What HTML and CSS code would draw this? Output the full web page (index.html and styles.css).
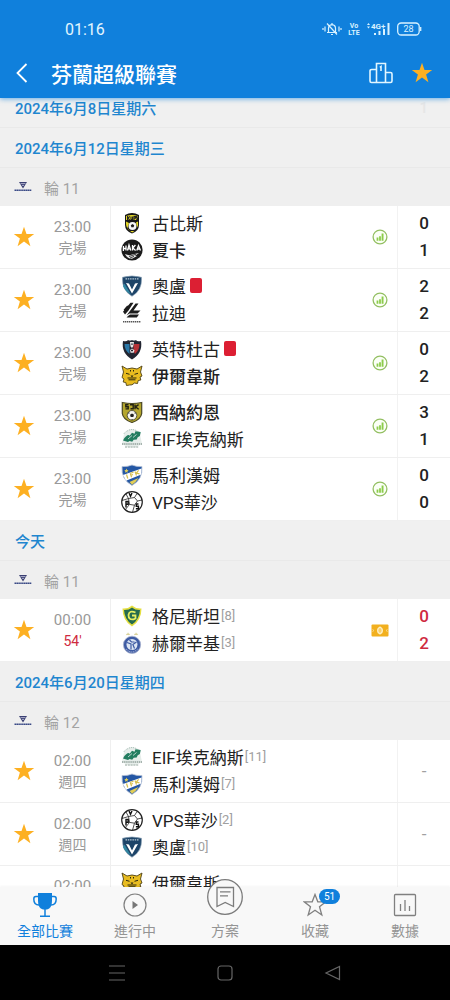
FILE: index.html
```html
<!DOCTYPE html>
<html lang="zh-Hant">
<head>
    <meta charset="UTF-8">
    <meta name="viewport" content="width=device-width, initial-scale=1.0">
    <title>芬蘭超級聯賽</title>
    <link rel="stylesheet" href="styles.css">
</head>
<body>

<!-- shared icons and club crests -->
<svg class="sprite" aria-hidden="true">
    <symbol id="star" viewBox="0 0 22 22">
        <path fill="#fdb022" d="M11 .8l2.5 7.2h7.7l-6.1 4.6 2.3 7.6-6.4-4.6-6.4 4.6 2.3-7.6L.8 8h7.7z"/>
    </symbol>
    <symbol id="stats" viewBox="0 0 16 16">
        <circle cx="8" cy="8" r="6.9" fill="#fbfff6" stroke="#93bf62" stroke-width="1.3"/>
        <path fill="#8ccc4a" d="M4.6 8.6h1.800v3.200H4.600zM7.100 7.200h1.800v4.600H7.100zM9.600 4.400h1.900v7.400H9.600z"/>
    </symbol>
    <symbol id="pitch" viewBox="0 0 18 13">
        <rect x=".5" y=".5" width="17" height="12" rx="1" fill="#f2b01e"/>
        <path fill="none" stroke="#f9d98c" d="M9 2v9M1.500 5.500L3 6.500 1.500 7.500M16.500 5.500L15 6.500l1.500 1"/>
        <ellipse cx="9" cy="6.500" rx="2.300" ry="3" fill="#f9d06c" stroke="#fff3cf" stroke-width="1.200"/>
    </symbol>
    <symbol id="league" viewBox="0 0 18 12">
        <path fill="#3a3f72" d="M5 1h8L9 7.600z"/>
        <path fill="none" stroke="#c9cbe0" stroke-width=".8" d="M6.500 2.600h5M8 4.400h2"/>
        <path stroke="#3a4a86" stroke-width="1.500" stroke-dasharray="1.600 .3" d="M.5 9.300h17"/>
    </symbol>

    <symbol id="kups" viewBox="0 0 22 22">
        <path fill="#161616" d="M4 3q7-4 14 0v10q0 6-7 8.600Q4 19 4 13z"/>
        <path fill="#e9dc2a" d="M5 4q6-2 12 0v4H5z"/>
        <path fill="none" stroke="#222" stroke-width="1.100" d="M6.500 4v4M8.800 4.500L6.800 6l2 1.800M10 4.500v3h1.600v-3M13 8V4.600h1.500v1.700H13M16.500 4.400h-1.100v1.500h1.100v1.700h-1.300"/>
        <circle cx="11.500" cy="14" r="4" fill="#f6f6f6"/>
        <path fill="#222" d="M11.500 12l1.700 1.300-.6 2h-2.200l-.6-2z"/>
        <path fill="#e9dc2a" d="M5 9.500l3 1.500-1.500 5 2.500 3Q4.600 16 5 9.500zm12 0l-2 1 1.300 5Q17.500 13 17 9.500zM9 19h4.500l-2.300 1.600z"/>
    </symbol>
    <symbol id="haka" viewBox="0 0 22 22">
        <circle cx="11" cy="11" r="10.600" fill="#1b1b1b"/>
        <path fill="none" stroke="#fff" stroke-width="1.300" d="M2.400 7v5M5 6.500v5M2.400 9.500H5M6.500 11.500L8 6l1.800 5.500M7 9.800h2M11.500 6v5.500M14.400 6l-2.600 3 2.800 2.500M15.800 11.500L17.500 6.500l2 5M16.300 10h2.500"/>
        <path fill="#e8e8e8" d="M4 15q4 2 7 .5l7-1.500-4 2.800 2 .3-5 2.700q-5-.3-7-4.800z"/>
        <path stroke="#1b1b1b" stroke-width=".8" d="M8 17.500l7-2.300M9 19l4-1.600"/>
    </symbol>
    <symbol id="ac" viewBox="0 0 22 22">
        <path fill="#1d4468" stroke="#94a9bb" stroke-width=".7" d="M1.500 2.300Q11-.5 20.500 2.300q1 13-9.500 19Q.5 15 1.500 2.300z"/>
        <path stroke="#b8cad6" stroke-width="1.300" stroke-dasharray="1.500 .8" d="M4.500 3.900h13"/>
        <path fill="#fff" d="M5 8l3 .5 3 6 3-6 3-.5-6 10.500z"/>
        <path fill="#3186a1" d="M2 11q2 5 8 8.500l-3-5-3.500-6z"/>
    </symbol>
    <symbol id="lahti" viewBox="0 0 22 22">
        <path fill="#1c1c1c" d="M9.500 .8h3L7.500 8.500 4 12.500 2 9.800zM14.500 1.500h3l-5 7h7l-3 3H8.500L5.500 13.500zM7 14l2-1.500h9L15.800 15.500H5.500z"/>
        <path fill="#1c1c1c" d="M6 3.800h2L3.600 9l-1-1.200z"/>
        <path stroke="#555" stroke-width="1.500" stroke-dasharray="1.400 .6" d="M2 19.800h18"/>
    </symbol>
    <symbol id="inter" viewBox="0 0 22 22">
        <path fill="#222531" d="M2 3q4 1 5-1 2 1 4 0 2 1 4 0 1 2 5 1 2 12-9 18.500Q0 15 2 3z"/>
        <path fill="#2b78a8" d="M3.500 6h5v10q-5-4-5-10z"/>
        <path fill="#b73337" d="M12.500 6h6q0 6-4.500 10l-1.500-3z"/>
        <path fill="#e9e9e9" d="M9 4h4l-.8 4.500L11 10 9.500 8.500zM9 12l2-1.500 2.500 1.700-.8 2.600H9.600z"/>
        <path fill="#222531" d="M10 11.800h2v1.500h-2zM10.200 5.500h1.600v1.300h-1.600z"/>
    </symbol>
    <symbol id="ilves" viewBox="0 0 22 22">
        <path fill="#e8bc20" stroke="#4d4116" stroke-width=".9" d="M1 1l5 3q5-2 10 0l5-3-1.500 6 1.500 4-2 1 .8 3-2.600.5-.7 3-3-.5-2.500 1.800L8.500 20l-3 .5-.7-3-2.600-.5.8-3-2-1.500L2.500 7z"/>
        <path fill="none" stroke="#2c280f" stroke-width="1" d="M5 8.300l3.500 1M17 8.300l-3.500 1M6.500 13h9M7.500 14.800h7M9.500 5v1.500M12.500 5v1.500"/>
        <path fill="#2c280f" d="M9.500 10.500h3L11 12.400z"/>
    </symbol>
    <symbol id="sjk" viewBox="0 0 22 22">
        <path fill="#b5a72e" stroke="#4a4724" stroke-width="1.200" d="M1.300 1.500q9.700 2 19.400 0v11q-.7 6-9.700 9-9-3-9.700-9z"/>
        <path fill="none" stroke="#222212" stroke-width="1.400" d="M7.500 3.800H4.800v2h2.400v2.100H4.500M9 3.800h3.200v3.900H9.500M14 3.600v4.600M17.600 3.600l-3.200 2.200 3.300 2.400"/>
        <circle cx="11" cy="14.300" r="4.800" fill="#f7f7f0" stroke="#26261a" stroke-width=".7"/>
        <path fill="#222" d="M11 12.400l2 1.400-.7 2.200H9.700L9 13.800zM6.800 12l1.600-.8-.2 1.800zM15.200 12l-1.600-.8.200 1.800zM10 18.200h2.200l-1 .9z"/>
    </symbol>
    <symbol id="eif" viewBox="0 0 22 22">
        <path fill="#e6edea" d="M3 6Q11-3 19 6l2 10q-10 7-20 0z"/>
        <path fill="none" stroke="#9bb3aa" stroke-dasharray="1.200 .8" d="M3 5.500Q11-2.500 19 5.500"/>
        <path fill="#237d60" d="M2 12.500q3-6 6.500-5.500l-.5 1.500 3-3.800 2.500 1 1-2.500 5.200.8-.8 4-2.200 1.200-1 2.300-3 .2-1.500 2-2.600-.7-1.600 1z"/>
        <path stroke="#f4f8f6" stroke-width=".7" d="M7 11l4-3.500M12 9.500l3.500-3"/>
        <path fill="none" stroke="#a7b4af" stroke-width="1.800" stroke-dasharray="1.400 .7" d="M1 16h20"/>
        <path fill="none" stroke="#b6c2bd" stroke-width="1.500" stroke-dasharray="2 .8" d="M4 19h14"/>
    </symbol>
    <symbol id="ifk" viewBox="0 0 22 22">
        <path fill="#2457a4" stroke="#b7c3d7" stroke-width=".8" d="M1 2.500Q6 3 11 1q5 2 10 1.500 1 13-10 19Q0 15.500 1 2.500z"/>
        <path fill="#fff" d="M2 11L20.500 4.500l-.3 6L5 16.800z"/>
        <path fill="none" stroke="#d5bf4d" stroke-width="1.200" d="M5.500 10.500l1.300 4M9.200 9.300l1.400 4M9.500 9.200l3-1M10 11.200l2-.7M14 7.500l1.500 4M17.600 6.300l-2.300 2.800 3.200.7"/>
        <path fill="#e2ce56" d="M5.500 4.500l.6 1.500 1.500.2-1.200 1 .3 1.500-1.400-.8-1.300.8.300-1.500-1-1 1.500-.2zM8.500 18l9-4-3 4-3.500 2.700z"/>
    </symbol>
    <symbol id="vps" viewBox="0 0 22 22">
        <circle cx="11" cy="11" r="10.300" fill="#fff" stroke="#222" stroke-width="1.200"/>
        <path fill="none" stroke="#222" stroke-width=".8" d="M5 3l2.500 4.500 6-1 2.500-4M7.500 7.500L1 9.500M13.500 6.500l3 3.500 4.500-1M16.500 10l-3 4.200-5-.8-1-5.900M8.500 13.400L4 19M13.500 14.200l-2 7"/>
        <path fill="none" stroke="#111" stroke-width="1.400" d="M8 2l1.500 3.300L11 2M5 16.500V10.500h2.200v2.800H5M17.500 13h-2.200v2.300h2.100v2.500h-2.500"/>
    </symbol>
    <symbol id="gnistan" viewBox="0 0 22 22">
        <path fill="#e5df40" d="M1.500 3.500Q7 4 11 .5 15 4 20.500 3.500q0 12-9.500 18Q1.500 15.500 1.500 3.500z"/>
        <path fill="#256b4e" d="M3 5q5 .2 8-2.600Q14 5.200 19 5q-.5 9.500-8 14.500Q3.500 14.500 3 5z"/>
        <path fill="none" stroke="#e5ee62" stroke-width="1.800" d="M14.500 7.500q-6-2.700-7 2.500 0 5 5 4.300l2-.8v-3H11"/>
    </symbol>
    <symbol id="hjk" viewBox="0 0 22 22">
        <path fill="#d7cf93" d="M7 .3l.8 1.500 1.500.2L8 3.200 7 2.700l-1.300.6L5 2l1.400-.2zM15 .3l.8 1.500 1.500.2L16 3.200l-1-.5-1.300.6L13 2l1.400-.2z"/>
        <circle cx="11" cy="12.800" r="8.600" fill="#3e5ba3" stroke="#a7b1ce" stroke-width=".8"/>
        <circle cx="11" cy="12.500" r="5.500" fill="#dce5f3"/>
        <path fill="none" stroke="#3e5ba3" stroke-width="1.200" d="M6 10.500l4 1.500v5.500M15.500 10l-3.600 2.500 1.600 4M8.500 8l2 2h3"/>
        <path fill="none" stroke="#cbd4eb" stroke-dasharray="1 1" d="M5.200 17q5.500 6 11.500 0"/>
    </symbol>
</svg>

<header class="top">
    <div class="status">
        <span class="clock">01:16</span>
        <div class="status-icons">
            <svg width="20" height="14" viewBox="0 0 20 14" fill="none" stroke="#d9f2ff" stroke-width="1.200">
                <path d="M5 10.500h10M6.500 10V6.500q0-3.500 3.500-3.800 3.500.3 3.500 3.800V10M10 1v2M9 12.500h2M5 1.500l10 11M3 4.500v5M1 6v2M17 4.500v5M19 6v2"/>
            </svg>
            <svg class="volte" width="12" height="14" viewBox="0 0 12 14">
                <text x="6" y="6">Vo</text><text x="6" y="13">LTE</text>
            </svg>
            <svg class="signal" width="25" height="14" viewBox="0 0 25 14">
                <path d="M1 3l1.500-2L4 3zM1 4.500h3l-1.500 2zM8 11h2v2H8zM12.500 9h2v4h-2zM17 7h2v6h-2zM21.500 1h2v12h-2z"/>
                <text x="5" y="7">4G+</text>
            </svg>
            <svg class="battery" width="25" height="14" viewBox="0 0 25 14">
                <rect x=".7" y="1" width="21.500" height="12" rx="3.500"/>
                <path d="M23.700 5v4"/>
                <text x="11.500" y="10">28</text>
            </svg>
        </div>
    </div>
    <div class="titlebar">
        <button class="icon-btn back" aria-label="返回">
            <svg width="12" height="20" viewBox="0 0 12 20" fill="none" stroke="#fff" stroke-width="1.800"><path d="M10.500 1L1.500 10l9 9"/></svg>
        </button>
        <h1>芬蘭超級聯賽</h1>
        <button class="icon-btn" aria-label="排名">
            <svg width="24" height="22" viewBox="0 0 24 22" fill="none" stroke="#e2f6ff" stroke-width="1.600">
                <path d="M7.500 20.500V1.500h9v19M7.500 7.500H2.800Q1 7.500 1 9v10q0 1.500 1.500 1.500h19q1.500 0 1.500-1.500v-7q0-1.500-1.500-1.500h-5M10.800 5.300L12 4.500V9"/>
            </svg>
        </button>
        <button class="icon-btn" aria-label="收藏聯賽"><svg width="22" height="22"><use href="#star"/></svg></button>
    </div>
</header>

<main class="list">
    <h2 class="date leaving"><span>2024年6月8日星期六</span><span class="ghost">1</span></h2>

    <section>
        <h2 class="date">2024年6月12日星期三</h2>
        <h3 class="round"><svg width="18" height="12"><use href="#league"/></svg>輪 11</h3>
        <ul>
            <li class="match">
                <button class="fav" aria-label="收藏"><svg width="22" height="22"><use href="#star"/></svg></button>
                <div class="time"><span>23:00</span><span>完場</span></div>
                <div class="teams">
                    <div class="team"><svg class="crest"><use href="#kups"/></svg>古比斯</div>
                    <div class="team win"><svg class="crest"><use href="#haka"/></svg>夏卡</div>
                </div>
                <div class="info"><svg width="16" height="16"><use href="#stats"/></svg></div>
                <div class="score"><span>0</span><span>1</span></div>
            </li>
            <li class="match">
                <button class="fav" aria-label="收藏"><svg width="22" height="22"><use href="#star"/></svg></button>
                <div class="time"><span>23:00</span><span>完場</span></div>
                <div class="teams">
                    <div class="team"><svg class="crest"><use href="#ac"/></svg>奧盧<i class="red-card"></i></div>
                    <div class="team"><svg class="crest"><use href="#lahti"/></svg>拉迪</div>
                </div>
                <div class="info"><svg width="16" height="16"><use href="#stats"/></svg></div>
                <div class="score"><span>2</span><span>2</span></div>
            </li>
            <li class="match">
                <button class="fav" aria-label="收藏"><svg width="22" height="22"><use href="#star"/></svg></button>
                <div class="time"><span>23:00</span><span>完場</span></div>
                <div class="teams">
                    <div class="team"><svg class="crest"><use href="#inter"/></svg>英特杜古<i class="red-card"></i></div>
                    <div class="team win"><svg class="crest"><use href="#ilves"/></svg>伊爾韋斯</div>
                </div>
                <div class="info"><svg width="16" height="16"><use href="#stats"/></svg></div>
                <div class="score"><span>0</span><span>2</span></div>
            </li>
            <li class="match">
                <button class="fav" aria-label="收藏"><svg width="22" height="22"><use href="#star"/></svg></button>
                <div class="time"><span>23:00</span><span>完場</span></div>
                <div class="teams">
                    <div class="team win"><svg class="crest"><use href="#sjk"/></svg>西納約恩</div>
                    <div class="team"><svg class="crest"><use href="#eif"/></svg>EIF埃克納斯</div>
                </div>
                <div class="info"><svg width="16" height="16"><use href="#stats"/></svg></div>
                <div class="score"><span>3</span><span>1</span></div>
            </li>
            <li class="match">
                <button class="fav" aria-label="收藏"><svg width="22" height="22"><use href="#star"/></svg></button>
                <div class="time"><span>23:00</span><span>完場</span></div>
                <div class="teams">
                    <div class="team"><svg class="crest"><use href="#ifk"/></svg>馬利漢姆</div>
                    <div class="team"><svg class="crest"><use href="#vps"/></svg>VPS華沙</div>
                </div>
                <div class="info"><svg width="16" height="16"><use href="#stats"/></svg></div>
                <div class="score"><span>0</span><span>0</span></div>
            </li>
        </ul>
    </section>

    <section>
        <h2 class="date">今天</h2>
        <h3 class="round"><svg width="18" height="12"><use href="#league"/></svg>輪 11</h3>
        <ul>
            <li class="match live">
                <button class="fav" aria-label="收藏"><svg width="22" height="22"><use href="#star"/></svg></button>
                <div class="time"><span>00:00</span><span class="minute">54'</span></div>
                <div class="teams">
                    <div class="team"><svg class="crest"><use href="#gnistan"/></svg>格尼斯坦<small>[8]</small></div>
                    <div class="team"><svg class="crest"><use href="#hjk"/></svg>赫爾辛基<small>[3]</small></div>
                </div>
                <div class="info"><svg width="18" height="13"><use href="#pitch"/></svg></div>
                <div class="score"><span>0</span><span>2</span></div>
            </li>
        </ul>
    </section>

    <section>
        <h2 class="date">2024年6月20日星期四</h2>
        <h3 class="round"><svg width="18" height="12"><use href="#league"/></svg>輪 12</h3>
        <ul>
            <li class="match">
                <button class="fav" aria-label="收藏"><svg width="22" height="22"><use href="#star"/></svg></button>
                <div class="time"><span>02:00</span><span>週四</span></div>
                <div class="teams">
                    <div class="team"><svg class="crest"><use href="#eif"/></svg>EIF埃克納斯<small>[11]</small></div>
                    <div class="team"><svg class="crest"><use href="#ifk"/></svg>馬利漢姆<small>[7]</small></div>
                </div>
                <div class="info"></div>
                <div class="score none">-</div>
            </li>
            <li class="match">
                <button class="fav" aria-label="收藏"><svg width="22" height="22"><use href="#star"/></svg></button>
                <div class="time"><span>02:00</span><span>週四</span></div>
                <div class="teams">
                    <div class="team"><svg class="crest"><use href="#vps"/></svg>VPS華沙<small>[2]</small></div>
                    <div class="team"><svg class="crest"><use href="#ac"/></svg>奧盧<small>[10]</small></div>
                </div>
                <div class="info"></div>
                <div class="score none">-</div>
            </li>
            <li class="match next">
                <button class="fav" aria-label="收藏"><svg width="22" height="22"><use href="#star"/></svg></button>
                <div class="time"><span>02:00</span></div>
                <div class="teams">
                    <div class="team"><svg class="crest"><use href="#ilves"/></svg>伊爾韋斯</div>
                </div>
                <div class="info"></div>
                <div class="score none"></div>
            </li>
        </ul>
    </section>
</main>

<nav class="tabs">
    <a href="#" class="tab active">
        <svg width="24" height="24" viewBox="0 0 24 24">
            <path fill="#1080dc" d="M5 0h14v8q0 7-5 8.500h-4Q5 15 5 8z"/>
            <path fill="none" stroke="#1080dc" stroke-width="1.500" d="M5 3.500H2.800Q.8 3.500.8 6q0 6 5.200 6M19 3.500h2.200q2 0 2 2.500 0 6-5.200 6M12 16v7M7 23.200h10"/>
        </svg>
        <span>全部比賽</span>
    </a>
    <a href="#" class="tab">
        <svg width="24" height="24" viewBox="0 0 24 24">
            <circle cx="12" cy="12" r="11" fill="none" stroke="#808080" stroke-width="1.200"/>
            <path fill="#777" d="M9.500 8l5.500 4-5.500 4z"/>
        </svg>
        <span>進行中</span>
    </a>
    <a href="#" class="tab">
        <svg class="plan" width="36" height="36" viewBox="0 0 36 36" stroke="#7c7c7c" stroke-width="1.300">
            <circle cx="18" cy="18" r="17.300" fill="#f8f8f8"/>
            <path fill="none" d="M10 8.500h16.500v19L18.200 23.500 10 27.500zM13 12.800h10.500M13 16.800h8"/>
        </svg>
        <span>方案</span>
    </a>
    <a href="#" class="tab">
        <span class="icon-wrap">
            <svg width="24" height="24" viewBox="0 0 24 24" fill="none" stroke="#808080" stroke-width="1.300">
                <path d="M12 1.500l2.800 7.300h8l-6.300 5 2.300 8.200-6.800-4.700L5.200 22l2.300-8.200-6.300-5h8z"/>
            </svg>
            <b class="badge">51</b>
        </span>
        <span>收藏</span>
    </a>
    <a href="#" class="tab">
        <svg width="24" height="24" viewBox="0 0 24 24" fill="none" stroke="#808080" stroke-width="1.300">
            <rect x="1.500" y="1.500" width="21" height="21" rx="1"/>
            <path d="M7.500 11v7M12 7v11M16.500 13v5"/>
        </svg>
        <span>數據</span>
    </a>
</nav>

<footer class="sysbar">
    <button class="icon-btn" aria-label="選單"><svg width="18" height="18" viewBox="0 0 18 18"><path d="M1 2h16M1 9h16M1 16h16"/></svg></button>
    <button class="icon-btn" aria-label="主畫面"><svg width="18" height="18" viewBox="0 0 18 18"><rect x="2" y="2" width="14" height="14" rx="3"/></svg></button>
    <button class="icon-btn" aria-label="上一頁"><svg width="18" height="18" viewBox="0 0 18 18"><path d="M15.500 2.500v13L2 9z"/></svg></button>
</footer>

</body>
</html>
```

FILE: styles.css
```css
* {
    box-sizing: border-box;
}
body {
    margin: 0;
    height: 100vh;
    display: flex;
    flex-direction: column;
    overflow: hidden;
    background: #efefef;
    color: #222;
    font-family: Roboto, "Noto Sans CJK TC", sans-serif;
}
h1, h2, h3, ul {
    margin: 0;
    padding: 0;
    font-weight: 400;
}
button {
    padding: 0;
    border: 0;
    background: none;
    font: inherit;
}
svg {
    display: block;
    flex: none;
}
.sprite {
    position: absolute;
    width: 0;
    height: 0;
}
.icon-btn {
    display: flex;
    align-items: center;
    justify-content: center;
}

/* header */
.top {
    position: relative;
    z-index: 1;
    flex: none;
    background: #1080dc;
    color: #fff;
    box-shadow: 0 1px 5px rgba(16, 128, 220, 0.6);
}
.status {
    display: flex;
    align-items: center;
    justify-content: space-between;
    height: 48px;
    padding: 10px 28px 0 65px;
}
.clock {
    font-size: 16px;
    color: #e2f6ff;
}
.status-icons {
    display: flex;
    gap: 6px;
}
.status-icons text {
    font-size: 8px;
    font-weight: 700;
    fill: #d9f2ff;
}
.status-icons .volte text {
    font-size: 7px;
    text-anchor: middle;
}
.signal path {
    fill: #d9f2ff;
}
.battery rect, .battery path {
    fill: none;
    stroke: #d9f2ff;
    stroke-width: 1.3;
}
.status-icons .battery text {
    font-size: 9px;
    font-weight: 400;
    text-anchor: middle;
}
.titlebar {
    display: flex;
    align-items: center;
    gap: 18px;
    height: 50px;
    padding: 0 17px 0 16px;
}
.titlebar h1 {
    flex: 1;
    margin-left: 5px;
    font-size: 21px;
    font-weight: 500;
}

/* match list */
.list {
    flex: 1;
    min-height: 0;
    overflow: hidden;
}
.date {
    display: flex;
    align-items: center;
    height: 40px;
    padding: 0 15px;
    border-bottom: 1px solid #e9e9e9;
    background: #f0f0f0;
    color: #1f86cf;
    font-size: 15px;
    font-weight: 500;
}
.leaving {
    justify-content: space-between;
    margin-top: -10px;
    padding-right: 22px;
}
.ghost {
    color: #e6e6e6;
}
.round {
    display: flex;
    align-items: center;
    gap: 12px;
    height: 38px;
    padding: 0 14px;
    color: #a3a3a3;
    font-size: 15px;
}
.match {
    display: grid;
    grid-template-columns: 35px 75px 1fr 35px 53px;
    height: 63px;
    background: #fff;
    border-bottom: 1px solid #efefef;
}
.fav {
    display: flex;
    align-items: center;
    justify-content: flex-end;
}
.time {
    display: flex;
    flex-direction: column;
    justify-content: center;
    text-align: center;
    font-size: 15px;
    line-height: 21px;
    color: #999;
}
.time span:last-child:not(:first-child) {
    font-size: 14px;
    line-height: 20px;
}
.time .minute {
    color: #cf2a40;
}
.match .time .minute {
    font-size: 15px;
}
.teams {
    display: flex;
    flex-direction: column;
    justify-content: center;
    padding: 0 0 2px 10px;
    border-left: 1px solid #efefef;
}
.team {
    display: flex;
    align-items: center;
    height: 27px;
    font-size: 17px;
    white-space: nowrap;
}
.win {
    font-weight: 500;
}
.crest {
    width: 22px;
    height: 22px;
    margin-right: 9px;
}
.team small {
    margin-left: 1px;
    font-size: 13px;
    color: #a0a0a0;
}
.red-card {
    width: 12px;
    height: 15px;
    margin-left: 4px;
    border-radius: 2px;
    background: #dc1f33;
}
.info {
    display: flex;
    align-items: center;
    justify-content: center;
}
.score {
    display: flex;
    flex-direction: column;
    justify-content: center;
    border-left: 1px solid #f2f2f2;
    text-align: center;
    font-size: 17px;
    font-weight: 500;
    line-height: 27px;
}
.none {
    color: #a0a0a0;
    font-weight: 400;
}
.live .score {
    color: #cf2a40;
}
/* row that runs under the tab bar */
.next .time {
    justify-content: flex-start;
    padding-top: 10px;
}
.next .teams {
    justify-content: flex-start;
    padding-top: 3px;
}

/* bottom tabs */
.tabs {
    position: relative;
    flex: none;
    display: grid;
    grid-template-columns: repeat(5, 1fr);
    height: 58px;
    padding-top: 6px;
    background: #f8f8f8;
    box-shadow: 0 -1px 2px rgba(0, 0, 0, 0.04);
}
.tab {
    display: flex;
    flex-direction: column;
    align-items: center;
    color: #949494;
    font-size: 14px;
    line-height: 28px;
    text-decoration: none;
}
.active {
    color: #1080dc;
}
.plan {
    margin: -14px 0 2px;
}
.icon-wrap {
    position: relative;
}
.badge {
    position: absolute;
    top: -4px;
    left: 16px;
    width: 21px;
    border-radius: 8px;
    background: #1080dc;
    color: #fff;
    font-size: 10px;
    font-weight: 400;
    line-height: 15px;
    text-align: center;
}

/* android buttons */
.sysbar {
    flex: none;
    display: grid;
    grid-template-columns: repeat(3, 1fr);
    height: 55px;
    padding: 0 14%;
    background: #000;
}
.sysbar svg {
    fill: none;
    stroke: #666;
    stroke-width: 1.2;
}
```
